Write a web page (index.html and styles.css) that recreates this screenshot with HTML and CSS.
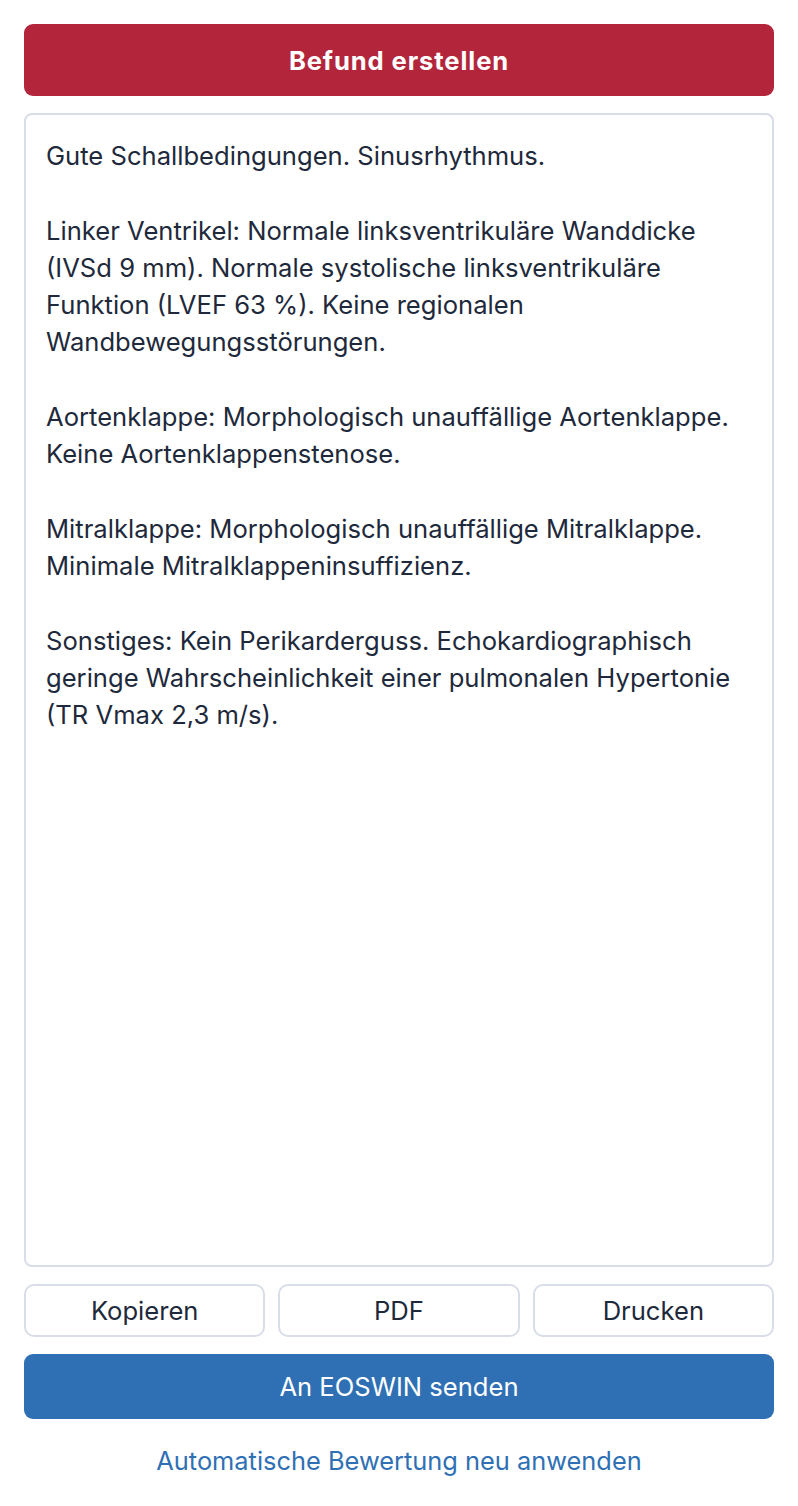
FILE: index.html
```html
<!DOCTYPE html>
<html lang="de">
<head>
    <meta charset="UTF-8">
    <meta name="viewport" content="width=device-width, initial-scale=1.0">
    <title>Befund</title>
    <link rel="stylesheet" href="styles.css">
</head>
<body>
    <div class="report-panel">
        <button class="btn-create">Befund erstellen</button>

        <textarea class="report-text" readonly>Gute Schallbedingungen. Sinusrhythmus.

Linker Ventrikel: Normale linksventrikuläre Wanddicke (IVSd 9 mm). Normale systolische linksventrikuläre Funktion (LVEF 63 %). Keine regionalen Wandbewegungsstörungen.

Aortenklappe: Morphologisch unauffällige Aortenklappe. Keine Aortenklappenstenose.

Mitralklappe: Morphologisch unauffällige Mitralklappe. Minimale Mitralklappeninsuffizienz.

Sonstiges: Kein Perikarderguss. Echokardiographisch geringe Wahrscheinlichkeit einer pulmonalen Hypertonie (TR Vmax 2,3 m/s).</textarea>

        <div class="actions">
            <button class="btn-outline">Kopieren</button>
            <button class="btn-outline">PDF</button>
            <button class="btn-outline">Drucken</button>
        </div>

        <button class="btn-send">An EOSWIN senden</button>

        <a href="#" class="reapply-link">Automatische Bewertung neu anwenden</a>
    </div>
</body>
</html>
```

FILE: styles.css
```css
body {
    font-family: Inter, "Noto Sans", sans-serif;
    background-color: #fff;
    margin: 0;
    padding: 24px 24px 0 24px;
    color: #1e293b;
}

.report-panel {
    display: flex;
    flex-direction: column;
}

button {
    font-family: inherit;
    cursor: pointer;
}

.btn-create {
    height: 72px;
    border: none;
    border-radius: 9px;
    background-color: #b3253b;
    color: #fff;
    font-size: 25.6px;
    font-weight: 700;
    letter-spacing: 0.9px;
}

.report-text {
    margin-top: 17px;
    height: 1154px;
    box-sizing: border-box;
    padding: 22px 20px;
    border: 2px solid #d8dde8;
    border-radius: 8px;
    font-family: inherit;
    font-size: 25.6px;
    line-height: 37.3px;
    color: #1e293b;
    resize: none;
    outline: none;
    overflow: hidden;
}

.actions {
    display: flex;
    gap: 13px;
    margin-top: 17px;
}

.btn-outline {
    flex: 1;
    height: 53px;
    background-color: #fff;
    border: 2px solid #d8dde8;
    border-radius: 10px;
    font-size: 25.6px;
    color: #1e293b;
}

.btn-send {
    margin-top: 17px;
    height: 65px;
    border: none;
    border-radius: 9px;
    background-color: #2f70b4;
    color: #fff;
    font-size: 25.6px;
}

.reapply-link {
    margin-top: 26px;
    text-align: center;
    font-size: 25.4px;
    color: #2f70b4;
    text-decoration: none;
}
```
